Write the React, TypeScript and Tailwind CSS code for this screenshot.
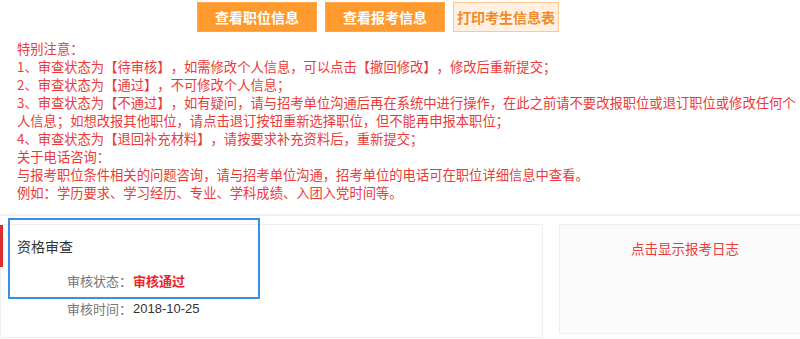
import React from 'react';

const notes = [
  '特别注意：',
  '1、审查状态为【待审核】，如需修改个人信息，可以点击【撤回修改】，修改后重新提交；',
  '2、审查状态为【通过】，不可修改个人信息；',
  '3、审查状态为【不通过】，如有疑问，请与招考单位沟通后再在系统中进行操作，在此之前请不要改报职位或退订职位或修改任何个',
  '人信息；如想改报其他职位，请点击退订按钮重新选择职位，但不能再申报本职位；',
  '4、审查状态为【退回补充材料】，请按要求补充资料后，重新提交；',
  '关于电话咨询：',
  '与报考职位条件相关的问题咨询，请与招考单位沟通，招考单位的电话可在职位详细信息中查看。',
  '例如：学历要求、学习经历、专业、学科成绩、入团入党时间等。'
];

export default function App() {
  return (
    <div
      className="relative h-[339px] w-[800px] overflow-hidden bg-white [text-spacing-trim:space-all]"
      style={{ fontFamily: '"Noto Sans CJK SC", "Noto Sans", sans-serif' }}
    >
      <div className="flex gap-2 pl-[197px] pt-[2px]">
        <button className="h-[30px] w-[120px] border border-[#ffa64d] bg-[#ff9a2e] text-[14px] font-bold text-white">
          查看职位信息
        </button>
        <button className="h-[30px] w-[120px] border border-[#ffa64d] bg-[#ff9a2e] text-[14px] font-bold text-white">
          查看报考信息
        </button>
        <button className="h-[30px] w-[106px] border border-[#fcc994] bg-[#fff0e1] text-[14px] font-bold text-[#f0892a]">
          打印考生信息表
        </button>
      </div>

      <div className="mt-[8px] pl-[17px] text-[13.3px] leading-[18px] text-[#ea3a3a]">
        {notes.map((line) => (
          <div key={line} className="whitespace-nowrap">
            {line}
          </div>
        ))}
      </div>

      <div className="mt-[12px] border-t-2 border-[#f0f0f0]" />

      <div className="mt-[8px] flex gap-4">
        <section className="relative h-[114px] w-[543px] shrink-0 border border-[#eeeeee] bg-white">
          <span className="absolute -left-px top-0 h-[42px] w-[3px] bg-[#e02b2b]" />
          <h3 className="pl-[16px] pt-[11px] text-[14px] leading-[20px] text-[#333]">资格审查</h3>
          <div className="mt-[15px] flex pl-[66px] text-[13px] leading-[20px]">
            <span className="w-[66px] text-[#777]">审核状态：</span>
            <span className="font-bold text-[#e8262b]">审核通过</span>
          </div>
          <div className="mt-[8px] flex pl-[66px] text-[13px] leading-[20px]">
            <span className="w-[66px] text-[#777]">审核时间：</span>
            <span className="text-[#333]" style={{ fontFamily: '"Liberation Sans", "Noto Sans CJK SC", sans-serif' }}>
              2018-10-25
            </span>
          </div>
        </section>

        <section className="h-[110px] w-[252px] shrink-0 border border-[#eeeeee] bg-[#fafafa]">
          <p className="pt-[13px] text-center text-[13.5px] leading-[20px] text-[#ea3a3a]">点击显示报考日志</p>
        </section>
      </div>

      <div className="pointer-events-none absolute left-[8px] top-[218px] h-[81px] w-[252px] border-2 border-[#3a8ee6]" />
    </div>
  );
}
